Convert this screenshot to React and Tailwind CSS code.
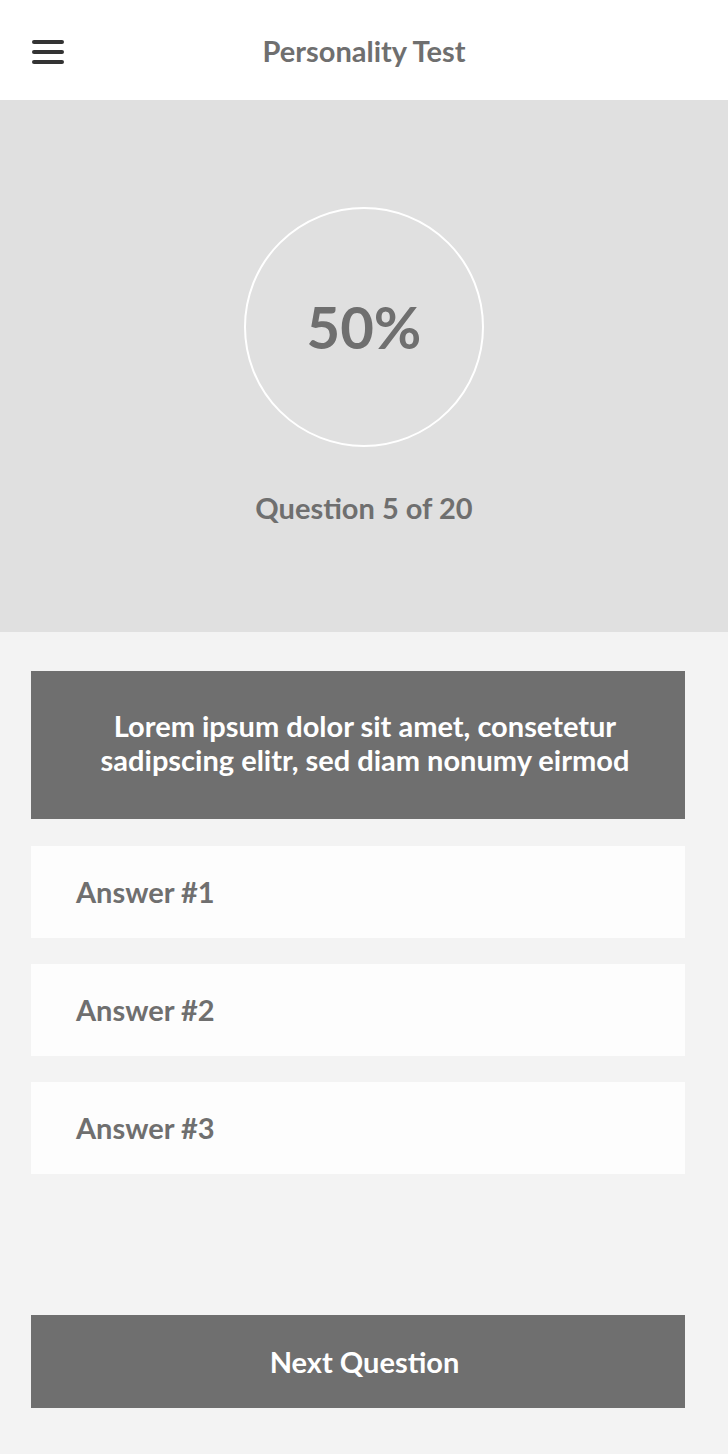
import React from 'react';

const answers = ['Answer #1', 'Answer #2', 'Answer #3'];

export default function App() {
  return (
    <div
      className="w-[728px] h-[1454px] flex flex-col bg-[#f3f3f3]"
      style={{ fontFamily: 'Lato, "Noto Sans", sans-serif' }}
    >
      {/* Header */}
      <header className="h-[100px] bg-white flex items-center relative shrink-0">
        <button className="absolute left-[32px] top-[40px] flex flex-col gap-[6.5px]">
          <span className="block w-[32px] h-[3.5px] rounded-sm bg-[#333]" />
          <span className="block w-[32px] h-[3.5px] rounded-sm bg-[#333]" />
          <span className="block w-[32px] h-[3.5px] rounded-sm bg-[#333]" />
        </button>
        <h1 className="w-full text-center text-[29px] font-bold text-[#6f6f6f] leading-none">
          Personality Test
        </h1>
      </header>

      {/* Progress */}
      <section className="h-[532px] bg-[#e0e0e0] flex flex-col items-center pt-[107px] shrink-0">
        <div className="w-[240px] h-[240px] rounded-full border-2 border-white flex items-center justify-center">
          <span className="text-[58px] font-bold text-[#6f6f6f] leading-none">50%</span>
        </div>
        <p className="mt-[46px] text-[29px] font-bold text-[#6f6f6f] leading-none">Question 5 of 20</p>
      </section>

      {/* Question + answers */}
      <main className="flex-1 flex flex-col px-[31px] pt-[39px]">
        <div className="w-[654px] h-[148px] bg-[#6f6f6f] flex items-center justify-center pl-[40px] pr-[26px] pb-[4px]">
          <p className="text-center text-white text-[29px] font-bold leading-[34px]">
            Lorem ipsum dolor sit amet, consetetur sadipscing elitr, sed diam nonumy eirmod
          </p>
        </div>

        <div className="mt-[27px] flex flex-col gap-[26px]">
          {answers.map((a) => (
            <button
              key={a}
              className="w-[654px] h-[92px] bg-[#fdfdfd] flex items-center pl-[45px] text-left text-[29px] font-bold text-[#6f6f6f]"
            >
              {a}
            </button>
          ))}
        </div>

        <button className="mt-[141px] w-[654px] h-[93px] bg-[#6f6f6f] text-white text-[29px] font-bold pl-[13px]">
          Next Question
        </button>
      </main>
    </div>
  );
}
